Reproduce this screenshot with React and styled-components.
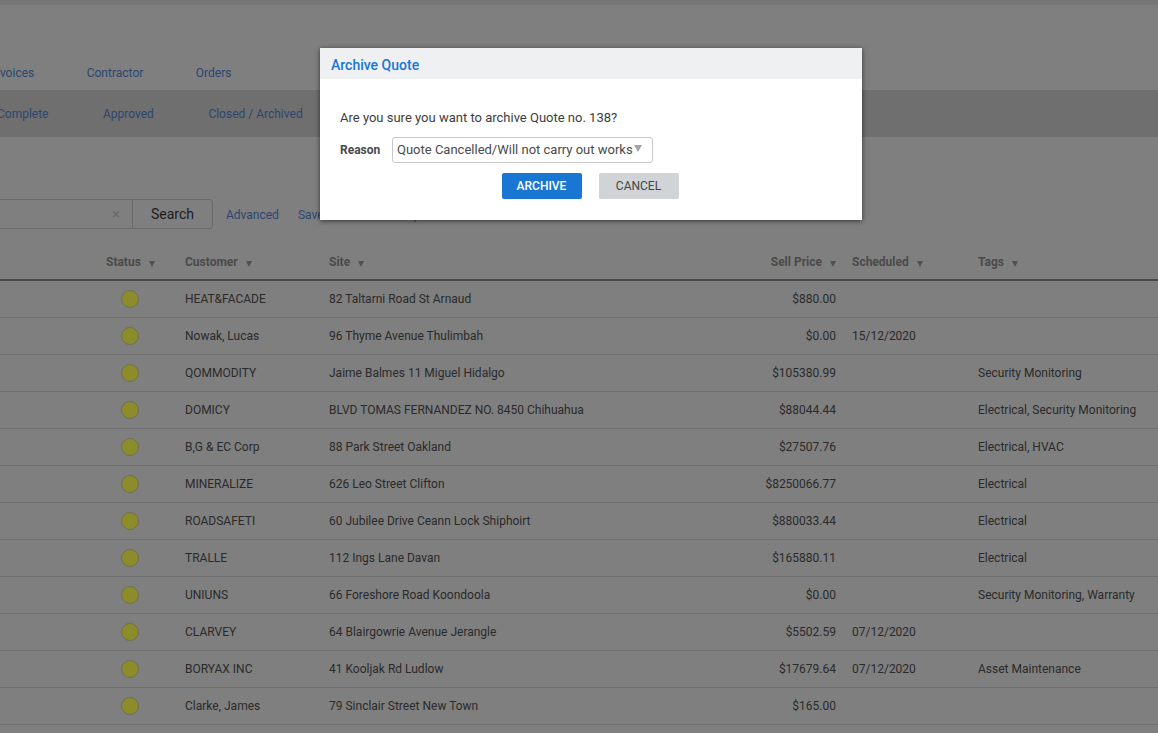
import React from 'react';
import styled, { createGlobalStyle } from 'styled-components';

const Global = createGlobalStyle`
  html, body { margin: 0; padding: 0; background: #7f7f7f; }
  body { font-family: Roboto, "Liberation Sans", sans-serif; font-size: 12px; color: #1f1f1f; overflow: hidden; }
`;

const Page = styled.div`
  position: relative;
  width: 1158px;
  height: 733px;
  overflow: hidden;
  background: #7f7f7f;
`;
const TopStrip = styled.div`height: 5px; background: #767676;`;
const MainNav = styled.nav`
  display: flex;
  align-items: center;
  height: 34px;
  margin-top: 51px;
  margin-left: -10px;
  gap: 52.5px;
`;
const NavLink = styled.a`
  color: #2c4670;
  font-size: 12px;
  white-space: nowrap;
`;
const SubNav = styled.nav`
  display: flex;
  align-items: center;
  height: 47px;
  background: #6f6f6f;
  margin-left: -3px;
  gap: 54.5px;
`;
const SearchRow = styled.div`
  display: flex;
  align-items: center;
  height: 30px;
  margin-top: 62px;
`;
const SearchInput = styled.div`
  box-sizing: border-box;
  width: 132px;
  height: 30px;
  border: 1px solid #6b6b6b;
  border-left: 0;
  border-right: 0;
  display: flex;
  align-items: center;
  justify-content: flex-end;
  padding-right: 12px;
  color: #6a6a6a;
  font-size: 15px;
`;
const SearchButton = styled.button`
  box-sizing: border-box;
  width: 81px;
  height: 30px;
  background: transparent;
  border: 1px solid #6b6b6b;
  border-radius: 0 3px 3px 0;
  color: #1c1c1c;
  font: 14px Roboto, sans-serif;
  padding: 0;
`;
const ToolLink = styled.a`
  color: #2c4670;
  font-size: 12px;
  margin-left: ${p => p.$gap}px;
  white-space: nowrap;
  position: relative;
  top: 1px;
`;
const columns = '185px 144px 411px 112px 126px 180px';
const HeadRow = styled.div`
  display: grid;
  grid-template-columns: ${columns};
  align-items: center;
  height: 52px;
  padding-top: 16px;
  box-sizing: border-box;
  border-bottom: 2px solid #484c4f;
`;
const HeadCell = styled.div`
  font-weight: 700;
  font-size: 12px;
  color: #4a4a4a;
  white-space: nowrap;
  text-align: ${p => (p.$right ? 'right' : 'left')};
  padding-left: ${p => p.$pad || 0}px;
  padding-right: ${p => (p.$right ? 16 : 0)}px;
`;
const Caret = styled.span`
  display: inline-block;
  width: 0;
  height: 0;
  margin-left: 8px;
  border-left: 3.5px solid transparent;
  border-right: 3.5px solid transparent;
  border-top: 6px solid #525252;
  vertical-align: -1px;
`;
const Row = styled.div`
  display: grid;
  grid-template-columns: ${columns};
  align-items: center;
  height: 37px;
  box-sizing: border-box;
  border-bottom: 1px solid #6e6e6e;
`;
const Cell = styled.div`
  white-space: nowrap;
  color: #2a2a2a;
  text-align: ${p => (p.$right ? 'right' : 'left')};
  padding-right: ${p => (p.$right ? 16 : 0)}px;
`;
const Dot = styled.span`
  display: block;
  box-sizing: border-box;
  width: 18px;
  height: 18px;
  margin-left: 121px;
  border-radius: 50%;
  background: #8c8c2a;
  border: 1px solid #6f6f55;
`;
const Modal = styled.div`
  position: absolute;
  left: 320px;
  top: 48px;
  width: 542px;
  height: 172px;
  background: #fff;
  box-shadow: 0 1px 5px rgba(0, 0, 0, 0.6);
  color: #3d3d3d;
`;
const ModalTitle = styled.h2`
  margin: 0;
  height: 31px;
  line-height: 34px;
  padding-left: 11px;
  background: #eff0f2;
  color: #1976d2;
  font-size: 14px;
  font-weight: 500;
`;
const ModalBody = styled.div`
  padding: 0 20px;
`;
const Question = styled.p`
  margin: 0;
  padding-top: 31px;
  font-size: 13px;
  line-height: 16px;
`;
const ReasonRow = styled.div`
  display: flex;
  align-items: center;
  margin-top: 11px;
`;
const ReasonLabel = styled.label`
  width: 52px;
  font-size: 12px;
  font-weight: 700;
  color: #4a4a4a;
`;
const FakeSelect = styled.div`
  box-sizing: border-box;
  display: flex;
  align-items: center;
  width: 261px;
  height: 26px;
  padding: 0 0 1px 4px;
  border: 1px solid #c8c8c8;
  border-radius: 3px;
  font-size: 13px;
  color: #4a4a4a;
  white-space: nowrap;
`;
const SelectCaret = styled.span`
  width: 0;
  height: 0;
  margin: -3px 0 0 1px;
  border-left: 4.5px solid transparent;
  border-right: 4.5px solid transparent;
  border-top: 7px solid #a3a3a3;
`;
const Actions = styled.div`
  display: flex;
  justify-content: center;
  gap: 17px;
  margin-top: 10px;
  padding-right: 2px;
`;
const Btn = styled.button`
  box-sizing: border-box;
  width: 80px;
  height: 26px;
  border: 0;
  border-radius: 2px;
  padding: 0;
  font: ${p => (p.$primary ? 500 : 400)} 12px Roboto, sans-serif;
  background: ${p => (p.$primary ? '#1976d2' : '#d1d4d7')};
  color: ${p => (p.$primary ? '#fff' : '#444')};
`;

const rows = [
  ['HEAT&FACADE', '82 Taltarni Road St Arnaud', '$880.00', '', ''],
  ['Nowak, Lucas', '96 Thyme Avenue Thulimbah', '$0.00', '15/12/2020', ''],
  ['QOMMODITY', 'Jaime Balmes 11 Miguel Hidalgo', '$105380.99', '', 'Security Monitoring'],
  ['DOMICY', 'BLVD TOMAS FERNANDEZ NO. 8450 Chihuahua', '$88044.44', '', 'Electrical, Security Monitoring'],
  ['B,G & EC Corp', '88 Park Street Oakland', '$27507.76', '', 'Electrical, HVAC'],
  ['MINERALIZE', '626 Leo Street Clifton', '$8250066.77', '', 'Electrical'],
  ['ROADSAFETI', '60 Jubilee Drive Ceann Lock Shiphoirt', '$880033.44', '', 'Electrical'],
  ['TRALLE', '112 Ings Lane Davan', '$165880.11', '', 'Electrical'],
  ['UNIUNS', '66 Foreshore Road Koondoola', '$0.00', '', 'Security Monitoring, Warranty'],
  ['CLARVEY', '64 Blairgowrie Avenue Jerangle', '$5502.59', '07/12/2020', ''],
  ['BORYAX INC', '41 Kooljak Rd Ludlow', '$17679.64', '07/12/2020', 'Asset Maintenance'],
  ['Clarke, James', '79 Sinclair Street New Town', '$165.00', '', ''],
];

export default function App() {
  return (
    <Page>
      <Global />
      <TopStrip />
      <MainNav>
        <NavLink>Invoices</NavLink>
        <NavLink>Contractor</NavLink>
        <NavLink>Orders</NavLink>
      </MainNav>
      <SubNav>
        <NavLink>Complete</NavLink>
        <NavLink>Approved</NavLink>
        <NavLink>Closed / Archived</NavLink>
      </SubNav>
      <SearchRow>
        <SearchInput>×</SearchInput>
        <SearchButton>Search</SearchButton>
        <ToolLink $gap={13}>Advanced</ToolLink>
        <ToolLink $gap={19}>Saved Searches</ToolLink>
        <ToolLink $gap={18}>Export</ToolLink>
      </SearchRow>
      <HeadRow>
        <HeadCell $pad={106}>Status<Caret /></HeadCell>
        <HeadCell>Customer<Caret /></HeadCell>
        <HeadCell>Site<Caret /></HeadCell>
        <HeadCell $right>Sell Price<Caret /></HeadCell>
        <HeadCell>Scheduled<Caret /></HeadCell>
        <HeadCell>Tags<Caret /></HeadCell>
      </HeadRow>
      {rows.map(r => (
        <Row key={r[0]}>
          <Cell><Dot /></Cell>
          <Cell>{r[0]}</Cell>
          <Cell>{r[1]}</Cell>
          <Cell $right>{r[2]}</Cell>
          <Cell>{r[3]}</Cell>
          <Cell>{r[4]}</Cell>
        </Row>
      ))}
      <Modal>
        <ModalTitle>Archive Quote</ModalTitle>
        <ModalBody>
          <Question>Are you sure you want to archive Quote no. 138?</Question>
          <ReasonRow>
            <ReasonLabel>Reason</ReasonLabel>
            <FakeSelect>Quote Cancelled/Will not carry out works<SelectCaret /></FakeSelect>
          </ReasonRow>
          <Actions>
            <Btn $primary>ARCHIVE</Btn>
            <Btn>CANCEL</Btn>
          </Actions>
        </ModalBody>
      </Modal>
    </Page>
  );
}
